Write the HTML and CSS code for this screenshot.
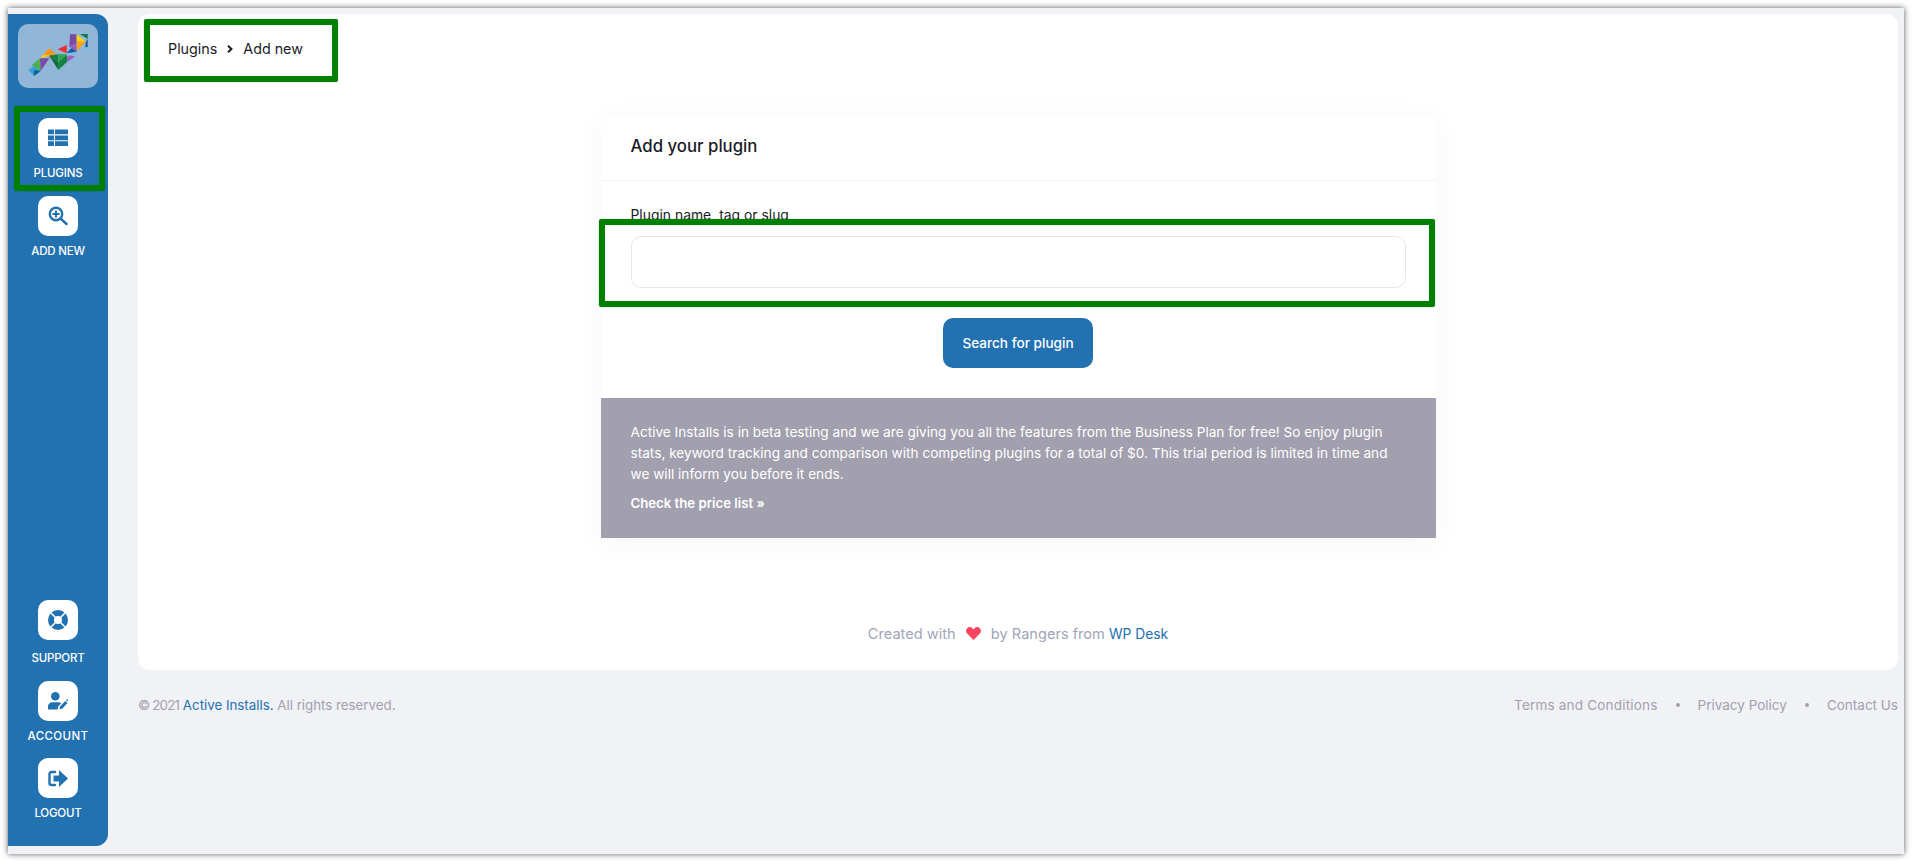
FILE: index.html
```html
<!DOCTYPE html>
<html lang="en">
<head>
  <meta charset="UTF-8" />
  <meta name="viewport" content="width=device-width, initial-scale=1.0" />
  <title>Active Installs - Add new</title>
  <link rel="stylesheet" href="styles.css">
</head>
<body>
  <div class="frame">
    <aside class="sidebar">
      <div class="logo">
        <svg width="80" height="64" viewBox="24 27 240 192">
          <polygon fill="#3aa0dc" points="55,165 75,150 92,168 72,183" />
          <polygon fill="#14618f" points="72,183 92,168 72,165" />
          <polygon fill="#4db04a" points="65,150 90,130 92,168" />
          <polygon fill="#7a4aa5" points="92,168 90,130 118,130" />
          <polygon fill="#ffd400" points="90,130 118,100 118,122" />
          <polygon fill="#c9781c" points="118,100 138,120 118,130" />
          <polygon fill="#f7941d" points="100,120 118,100 138,120" />
          <polygon fill="#0f7f45" points="118,122 145,118 145,142" />
          <polygon fill="#2fa84f" points="145,118 172,118 145,142" />
          <polygon fill="#0d6b3b" points="118,122 145,142 145,165" />
          <polygon fill="#11823f" points="172,118 172,140 145,165 145,142" />
          <polygon fill="#ee2b2f" points="143,103 170,90 170,115" />
          <polygon fill="#a05cc0" points="172,140 172,118 195,125" />
          <polygon fill="#7fc4e8" points="170,115 200,110 172,125" />
          <polygon fill="#0c5f9e" points="170,115 195,88 200,110" />
          <polygon fill="#7a4aa5" points="180,58 200,58 200,85 178,95" />
          <polygon fill="#8f5fc0" points="178,95 200,85 200,110" />
          <polygon fill="#ffd400" points="200,58 228,80 200,80" />
          <polygon fill="#0e7a44" points="210,57 233,57 233,72" />
          <polygon fill="#f7a21d" points="200,80 228,80 200,108" />
          <polygon fill="#0c5f9e" points="228,80 233,72 233,97 225,97" />
          <polygon fill="#6cc0ea" points="225,97 235,97 230,108" />
        </svg>
      </div>
      <nav class="nav-top">
        <a class="nav-item">
          <span class="nav-icon">
            <svg width="20" height="18" viewBox="0 0 20 18">
              <path d="M0 0.500h6v4.800h-6zM7 0.500h13v4.800h-13zM0 6.400h6v4.800h-6zM7 6.400h13v4.800h-13zM0 12.300h6v4.800h-6zM7 12.300h13v4.800h-13z" />
            </svg>
          </span>
          PLUGINS
        </a>
        <a class="nav-item">
          <span class="nav-icon">
            <svg width="20" height="20" viewBox="0 0 20 20">
              <circle class="line" cx="8" cy="8" r="6.200" />
              <path class="line" d="M13 13l5.600 5" />
              <path d="M7 4.500h2v2.500h2.500v2h-2.500v2.500h-2v-2.500h-2.500v-2h2.500z" />
            </svg>
          </span>
          ADD NEW
        </a>
      </nav>
      <nav class="nav-bottom">
        <a class="nav-item item-support">
          <span class="nav-icon">
            <svg width="20" height="20" viewBox="0 0 20 20">
              <circle cx="10" cy="10" r="10" />
              <circle cx="10" cy="10" r="4" fill="#fff" />
              <path class="cut" d="M2.800 2.800l4.400 4.400M17.200 2.800l-4.400 4.400M2.800 17.200l4.400-4.400M17.200 17.200l-4.400-4.400" />
            </svg>
          </span>
          SUPPORT
        </a>
        <a class="nav-item item-account">
          <span class="nav-icon">
            <svg width="20" height="18" viewBox="0 0 20 18">
              <circle cx="7.300" cy="4.300" r="4.300" />
              <path d="M0 17.500v-3c0-2.600 2-4.200 4.400-4.200h5.800c1.200 0 2.200.4 3 1l-3 3.200-.6 3z" />
              <path d="M11.500 17.300l.5-2.700 5.300-5.600 2.200 2.100-5.300 5.600zM18 8.300l.9-.9c.3-.3.700-.3 1 0l.1.800-.9 1.200z" />
            </svg>
          </span>
          ACCOUNT
        </a>
        <a class="nav-item item-logout">
          <span class="nav-icon">
            <svg width="20" height="17" viewBox="0 0 20 17">
              <path class="line" d="M7 2h-3.500c-1.100 0-2 .9-2 2v9c0 1.100.9 2 2 2h3.500" />
              <path d="M5.500 5.500h5.500v-5.500l9 8.500-9 8.500v-5.500h-5.500z" />
            </svg>
          </span>
          LOGOUT
        </a>
      </nav>
    </aside>

    <div class="content">
      <main class="panel">
        <div class="breadcrumb">
          <span>Plugins</span>
          <svg class="crumb-sep" width="6" height="8" viewBox="0 0 6 8"><path d="M1 .8l3.400 3.200-3.400 3.200" /></svg>
          <span>Add new</span>
        </div>

        <section class="form-card">
          <h2 class="form-title">Add your plugin</h2>
          <div class="form-body">
            <label class="form-label" for="slug">Plugin name, tag or slug</label>
            <input class="form-input" id="slug" type="text" />
            <button class="btn">Search for plugin</button>
          </div>
          <div class="notice">
            <p>Active Installs is in beta testing and we are giving you all the features from the Business Plan for free! So enjoy plugin<br>
            stats, keyword tracking and comparison with competing plugins for a total of $0. This trial period is limited in time and<br>
            we will inform you before it ends.</p>
            <a class="notice-link">Check the price list »</a>
          </div>
        </section>

        <p class="credit">
          Created with
          <svg class="heart" width="15" height="13" viewBox="0 0 15 13"><path d="M7.500 13l-6.400-6.500c-1.500-1.600-1.400-3.900 0-5.300 1.500-1.500 3.900-1.500 5.300 0l1.100 1.200 1.100-1.200c1.400-1.500 3.800-1.500 5.300 0 1.400 1.400 1.500 3.700 0 5.300z" /></svg>
          by Rangers from <a class="link credit-link">WP Desk</a>
        </p>
      </main>

      <footer class="footer">
        <span class="copy"><span class="copy-year">© 2021</span> <a class="link">Active Installs.</a> All rights reserved.</span>
        <span class="footer-links">
          <a class="terms">Terms and Conditions</a>
          <i class="dot"></i>
          <a>Privacy Policy</a>
          <i class="dot"></i>
          <a>Contact Us</a>
        </span>
      </footer>
    </div>

    <div class="mark mark-crumb"></div>
    <div class="mark mark-nav"></div>
    <div class="mark mark-input"></div>
  </div>
</body>
</html>
```

FILE: styles.css
```css
html, body {
  height: 100%;
}
body {
  margin: 0;
  padding: 8px;
  box-sizing: border-box;
  background: #fff;
  font-family: 'Inter', 'Liberation Sans', sans-serif;
  font-size: 13px;
  color: #1b1b28;
}
.frame {
  position: relative;
  display: flex;
  height: 846px;
  padding: 6px 6px 8px 0;
  box-sizing: border-box;
  background: #f1f2f6;
  box-shadow: 0 0 6px rgba(0,0,0,0.65);
}

/* sidebar */
.sidebar {
  width: 100px;
  flex: none;
  display: flex;
  flex-direction: column;
  background: #2271b1;
  border-radius: 0 12px 12px 0;
}
.logo {
  width: 80px;
  height: 64px;
  margin: 10px auto 0;
  background: #91b6d8;
  border-radius: 10px;
}
.logo svg {
  display: block;
}
.nav-top {
  margin-top: 30px;
  display: flex;
  flex-direction: column;
  gap: 16px;
}
.nav-bottom {
  margin-top: auto;
  margin-bottom: 26px;
  display: flex;
  flex-direction: column;
}
.nav-item {
  display: flex;
  flex-direction: column;
  align-items: center;
  color: #fff;
  font-size: 11.500px;
  font-weight: 500;
  line-height: 14px;
  letter-spacing: -0.2px;
}
.nav-icon {
  width: 40px;
  height: 40px;
  margin-bottom: 8px;
  display: flex;
  align-items: center;
  justify-content: center;
  background: #fff;
  border-radius: 10px;
}
.nav-icon svg {
  fill: #2271b1;
}
.nav-icon .line {
  fill: none;
  stroke: #2271b1;
  stroke-width: 2.400;
  stroke-linecap: round;
}
.nav-icon .cut {
  fill: none;
  stroke: #fff;
  stroke-width: 1.600;
}
.item-support .nav-icon {
  margin-bottom: 11px;
}
.item-account {
  margin-top: 16px;
  letter-spacing: 0.4px;
}
.item-logout {
  margin-top: 15px;
}

/* main */
.content {
  flex: 1;
  margin-left: 30px;
  display: flex;
  flex-direction: column;
}
.panel {
  height: 656px;
  box-sizing: border-box;
  display: flex;
  flex-direction: column;
  background: #fff;
  border-radius: 12px;
}
.breadcrumb {
  display: flex;
  align-items: center;
  gap: 10px;
  padding: 24px 30px;
  font-size: 14.300px;
  line-height: 22px;
}
.crumb-sep {
  fill: none;
  stroke: #1b1b28;
  stroke-width: 2;
}
.form-card {
  width: 835px;
  margin: 31px auto 0;
  background: #fff;
  border-radius: 10px 10px 0 0;
  box-shadow: 0 5px 30px rgba(0,0,0,0.04);
}
.form-title {
  margin: 0;
  padding: 0 30px;
  height: 66px;
  box-sizing: border-box;
  border-bottom: 1px solid #f1f2f6;
  font-size: 16.800px;
  font-weight: 500;
  line-height: 63px;
}
.form-body {
  display: flex;
  flex-direction: column;
  padding: 24px 30px 30px;
}
.form-label {
  font-size: 13.900px;
  line-height: 20px;
  margin-bottom: 11px;
}
.form-input {
  height: 52px;
  box-sizing: border-box;
  border: 1px solid #e4e6ef;
  border-radius: 10px;
  background: #fff;
}
.btn {
  align-self: center;
  width: 150px;
  height: 50px;
  margin-top: 30px;
  border: none;
  border-radius: 10px;
  background: #2271b1;
  color: #fff;
  font-family: inherit;
  font-size: 13.600px;
  font-weight: 500;
}
.notice {
  padding: 24px 30px 25px;
  background: #a2a0ae;
  color: #fff;
  font-size: 13.640px;
  line-height: 21px;
}
.notice p {
  margin: 0;
}
.notice-link {
  display: block;
  margin-top: 8px;
  line-height: 20px;
  font-weight: 600;
  font-size: 13.200px;
}
.credit {
  margin: auto 0 26px;
  line-height: 20px;
  text-align: center;
  font-size: 14.600px;
  color: #a0a5ba;
}
.credit-link {
  font-size: 13.800px;
}
.heart {
  margin: 0 6px;
  fill: #f9455f;
  vertical-align: -1px;
}
.link {
  color: #2271b1;
}
.footer {
  margin-top: 25px;
  display: flex;
  justify-content: space-between;
  line-height: 20px;
  color: #a2a0ae;
}
.copy {
  font-size: 13.300px;
}
.copy-year {
  letter-spacing: -0.8px;
}
.footer-links {
  display: flex;
  align-items: center;
  gap: 18px;
  font-size: 13.500px;
}
.terms {
  letter-spacing: 0.2px;
}
.dot {
  width: 4px;
  height: 4px;
  border-radius: 50%;
  background: #a2a0ae;
}

/* green marks drawn over the screenshot */
.mark {
  position: absolute;
  box-sizing: border-box;
  border: 6px solid #008000;
  border-radius: 2px;
  box-shadow: 0 0 1px rgba(0,0,0,0.6);
}
.mark-crumb {
  left: 136px;
  top: 11px;
  width: 194px;
  height: 63px;
}
.mark-nav {
  left: 6px;
  top: 98px;
  width: 91px;
  height: 85px;
}
.mark-input {
  left: 591px;
  top: 211px;
  width: 836px;
  height: 88px;
}
```
